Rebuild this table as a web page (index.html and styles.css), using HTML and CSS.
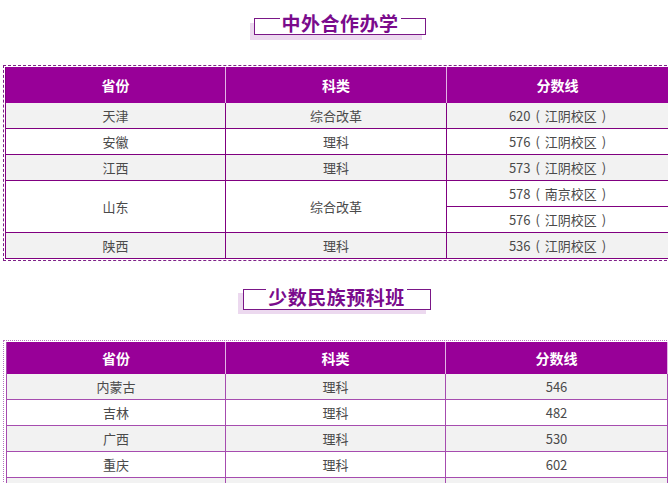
FILE: index.html
```html
<!DOCTYPE html>
<html lang="zh">
<head>
<meta charset="utf-8">
<link rel="stylesheet" href="styles.css">
</head>
<body>
<div class="page">
  <section class="sec sec-one">
    <div class="title title-one">
      <span class="ln"></span>
      <span class="tt">中外合作办学</span>
      <span class="ln"></span>
    </div>
    <div class="wrap wrap-one">
      <table class="grid grid-one">
        <colgroup><col class="c1"><col class="c2"><col class="c3"></colgroup>
        <thead>
          <tr><th>省份</th><th>科类</th><th>分数线</th></tr>
        </thead>
        <tbody>
          <tr class="g"><td>天津</td><td>综合改革</td><td>620 ( 江阴校区 )</td></tr>
          <tr><td>安徽</td><td>理科</td><td>576 ( 江阴校区 )</td></tr>
          <tr class="g"><td>江西</td><td>理科</td><td>573 ( 江阴校区 )</td></tr>
          <tr><td rowspan="2">山东</td><td rowspan="2">综合改革</td><td>578 ( 南京校区 )</td></tr>
          <tr><td>576 ( 江阴校区 )</td></tr>
          <tr class="g"><td>陕西</td><td>理科</td><td>536 ( 江阴校区 )</td></tr>
        </tbody>
      </table>
    </div>
  </section>
  <section class="sec sec-two">
    <div class="title title-two">
      <span class="ln"></span>
      <span class="tt">少数民族预科班</span>
      <span class="ln"></span>
    </div>
    <div class="wrap wrap-two">
      <table class="grid grid-two">
        <colgroup><col class="c1"><col class="c2"><col class="c3"></colgroup>
        <thead>
          <tr><th>省份</th><th>科类</th><th>分数线</th></tr>
        </thead>
        <tbody>
          <tr class="g"><td>内蒙古</td><td>理科</td><td>546</td></tr>
          <tr><td>吉林</td><td>理科</td><td>482</td></tr>
          <tr class="g"><td>广西</td><td>理科</td><td>530</td></tr>
          <tr><td>重庆</td><td>理科</td><td>602</td></tr>
          <tr class="g"><td>贵州</td><td>理科</td><td>570</td></tr>
        </tbody>
      </table>
    </div>
  </section>
</div>
</body>
</html>
```
FILE: styles.css
```css
html, body {
  margin: 0;
  padding: 0;
  background: #ffffff;
  overflow: hidden;
}
body {
  width: 668px;
  height: 483px;
  font-family: "Noto Sans CJK SC", "Microsoft YaHei", sans-serif;
  color: #4a4a4a;
}
.page {
  width: 668px;
}
.sec {
  display: flex;
  flex-direction: column;
}

/* section titles */
.title {
  display: flex;
  align-items: flex-start;
  align-self: center;
  box-sizing: border-box;
  border: 1.5px solid #7a1787;
  border-top: none;
  color: #7a0b8c;
  font-weight: 700;
}
.title .ln {
  flex: 1;
  border-top: 1.5px solid #7a1787;
}
.title .tt {
  padding: 0 2px;
  white-space: nowrap;
  letter-spacing: 0.5px;
}
.title-one {
  margin-top: 18px;
  margin-left: 12px;
  width: 172px;
  height: 17px;
  box-shadow: -4px 5px 0 #ecd9ef;
}
.title-one .tt {
  font-size: 19px;
  line-height: 20px;
  margin-top: -5px;
}
.title-two {
  margin-top: 28px;
  margin-left: 5px;
  width: 188px;
  height: 21px;
  box-shadow: -5px 4px 0 #ecd9ef;
}
.title-two .tt {
  font-size: 19px;
  line-height: 20px;
  margin-top: -2px;
}

/* table wrappers */
.wrap {
  margin-left: 3px;
  width: 680px;
}
.wrap-one {
  margin-top: 30px;
  border: 1px dashed #7f1f88;
  padding: 1px;
}
.wrap-two {
  margin-top: 30px;
  border: 1px dotted #b777bf;
  padding: 1px 2px;
}

/* tables */
.grid {
  border-collapse: separate;
  border-spacing: 0;
  table-layout: fixed;
  font-size: 13px;
  text-align: center;
}
.grid th {
  background: #980098;
  color: #ffffff;
  font-size: 14px;
  font-weight: 700;
  padding: 0;
  border-right: 1px solid #e2b3e4;
}
.grid td {
  padding: 0;
  line-height: 25px;
  border-right: 1px solid #800080;
  border-bottom: 1px solid #800080;
  background: #ffffff;
}
.grid tr.g td {
  background: #f2f2f2;
}

.grid-one {
  border-left: 1px solid #800080;
  width: 663px;
}
.grid-one td {
  word-spacing: 2px;
}
.grid-one .c1 { width: 220px; }
.grid-one .c2 { width: 221px; }
.grid-one .c3 { width: 222px; }
.grid-one th {
  line-height: 36px;
}

.grid-two {
  border-left: 1px solid #a64caf;
  width: 661px;
}
.grid-two .c1 { width: 219px; }
.grid-two .c2 { width: 220px; }
.grid-two .c3 { width: 222px; }
.grid-two th {
  line-height: 32px;
}
.grid-two td {
  line-height: 25px;
  border-right-color: #a64caf;
  border-bottom-color: #a64caf;
}
```
